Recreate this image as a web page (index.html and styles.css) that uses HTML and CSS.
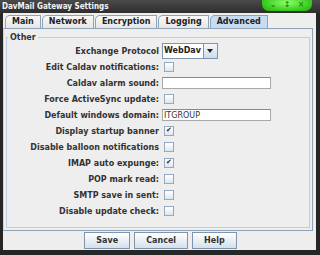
FILE: index.html
```html
<!DOCTYPE html>
<html lang="en">
<head>
  <meta charset="UTF-8">
  <title>DavMail Gateway Settings</title>
  <link rel="stylesheet" href="styles.css">
</head>
<body>
  <div class="window">
    <div class="titlebar">
      <span class="title">DavMail Gateway Settings</span>
      <div class="wm-buttons">
        <span>&#8964;</span>
        <span>&#8597;</span>
        <span>&#215;</span>
      </div>
    </div>

    <div class="content">
      <div class="tabs">
        <div class="tab">Main</div>
        <div class="tab">Network</div>
        <div class="tab">Encryption</div>
        <div class="tab">Logging</div>
        <div class="tab active">Advanced</div>
      </div>

      <div class="tab-panel">
        <fieldset class="group">
          <legend>Other</legend>
          <div class="form">
            <label>Exchange Protocol</label>
            <div class="combo"><span class="combo-text">WebDav</span><span class="combo-arrow"></span></div>

            <label>Edit Caldav notifications:</label>
            <span class="check"></span>

            <label>Caldav alarm sound:</label>
            <input class="field" type="text" value="">

            <label>Force ActiveSync update:</label>
            <span class="check"></span>

            <label>Default windows domain:</label>
            <input class="field" type="text" value="ITGROUP">

            <label>Display startup banner</label>
            <span class="check on"></span>

            <label>Disable balloon notifications</label>
            <span class="check"></span>

            <label>IMAP auto expunge:</label>
            <span class="check on"></span>

            <label>POP mark read:</label>
            <span class="check"></span>

            <label>SMTP save in sent:</label>
            <span class="check"></span>

            <label>Disable update check:</label>
            <span class="check"></span>
          </div>
        </fieldset>
      </div>

      <div class="buttons">
        <button>Save</button>
        <button>Cancel</button>
        <button>Help</button>
      </div>
    </div>
  </div>
</body>
</html>
```

FILE: styles.css
```css
body {
  margin: 0;
  background: #2a2a2a;
  font-family: 'DejaVu Sans', sans-serif;
}

.window {
  width: 320px;
  height: 255px;
  background: #262626;
  overflow: hidden;
}

/* title bar */
.titlebar {
  height: 13px;
  display: flex;
  align-items: center;
  background: linear-gradient(#4a4a4a, #2e2e2e);
  color: #f4f4f4;
}

.title {
  font-family: 'DejaVu Sans Condensed', 'DejaVu Sans', sans-serif;
  font-weight: bold;
  font-size: 8px;
  padding-left: 2px;
}

.wm-buttons {
  margin-left: auto;
  margin-right: 8px;
  margin-top: -3px;
  display: flex;
  gap: 4px;
  padding: 0 6px;
  height: 12px;
  border-radius: 0 0 7px 7px;
  background: radial-gradient(ellipse at 50% 30%, #8cff6a, #2fc414 75%);
  align-items: center;
}

.wm-buttons span {
  width: 10px;
  font-size: 8px;
  line-height: 8px;
  text-align: center;
  color: #1d6b10;
}

/* main dialog area */
.content {
  margin: 0 4px 0 3px;
  height: 237px;
  background: #eeeeee;
  display: flex;
  flex-direction: column;
}

.tabs {
  display: flex;
  margin: 2px 0 0 2px;
  height: 13px;
}

.tab {
  height: 12px;
  padding: 0 6px;
  margin-right: 1px;
  font-size: 8px;
  font-weight: bold;
  line-height: 12px;
  color: #222;
  border: 1px solid #8ea3b8;
  border-bottom: none;
  border-top-left-radius: 5px;
  background: linear-gradient(#f8f8f8, #e6e6e6);
}

.tab.active {
  background: #c8dcf0;
  height: 13px;
}

.tab-panel {
  flex: 1;
  margin-right: 3px;
  border: 1px solid #8ea3b8;
  border-left-color: #c7d5e3;
  background: #eeeeee;
  padding: 0 2px 2px 2px;
}

.group {
  margin: 4px 0 0 0;
  padding: 1px 0 8px 0;
  border: 1px solid #b8cfe5;
}

.group legend {
  font-size: 8px;
  font-weight: bold;
  color: #333;
  padding: 0 2px;
  margin-left: 1px;
}

.form {
  display: grid;
  grid-template-columns: 152px 1fr;
  grid-auto-rows: 16px;
  column-gap: 3px;
  align-items: center;
}

.form label {
  text-align: right;
  font-size: 8px;
  font-weight: bold;
  color: #333;
  white-space: nowrap;
}

.combo {
  width: 54px;
  height: 14px;
  display: flex;
  border: 1px solid #7f95ab;
  background: #fff;
}

.combo-text {
  flex: 1;
  font-size: 8px;
  font-weight: bold;
  line-height: 14px;
  padding-left: 1px;
  color: #222;
}

.combo-arrow {
  width: 13px;
  border-left: 1px solid #7f95ab;
  background: linear-gradient(#f4f8fc, #cddbe9);
  position: relative;
}

.combo-arrow::after {
  content: "";
  position: absolute;
  left: 3px;
  top: 5px;
  border-left: 3px solid transparent;
  border-right: 3px solid transparent;
  border-top: 4px solid #222;
}

.check {
  width: 8px;
  height: 8px;
  margin-left: 2px;
  border: 1px solid #94a8be;
  background: linear-gradient(#ffffff, #dde7f1);
  position: relative;
}

.check.on::after {
  content: "\2714";
  position: absolute;
  left: 1px;
  top: -1px;
  font-size: 7px;
  color: #222;
}

.field {
  width: 109px;
  height: 12px;
  box-sizing: border-box;
  border: 1px solid #a8a8a8;
  border-top-color: #8a8a8a;
  padding: 0 1px;
  font-family: 'DejaVu Sans', sans-serif;
  font-size: 8px;
  color: #333;
  background: #fff;
  margin: 0;
}

/* bottom buttons */
.buttons {
  height: 21px;
  display: flex;
  justify-content: center;
  align-items: center;
  gap: 4px;
  padding-left: 2px;
}

.buttons button {
  height: 17px;
  padding: 0 11px;
  font-family: 'DejaVu Sans', sans-serif;
  font-size: 8px;
  font-weight: bold;
  color: #333;
  border: 1px solid #7f95ab;
  background: linear-gradient(#ffffff, #d4e0ec);
  min-width: 43px;
}
```
